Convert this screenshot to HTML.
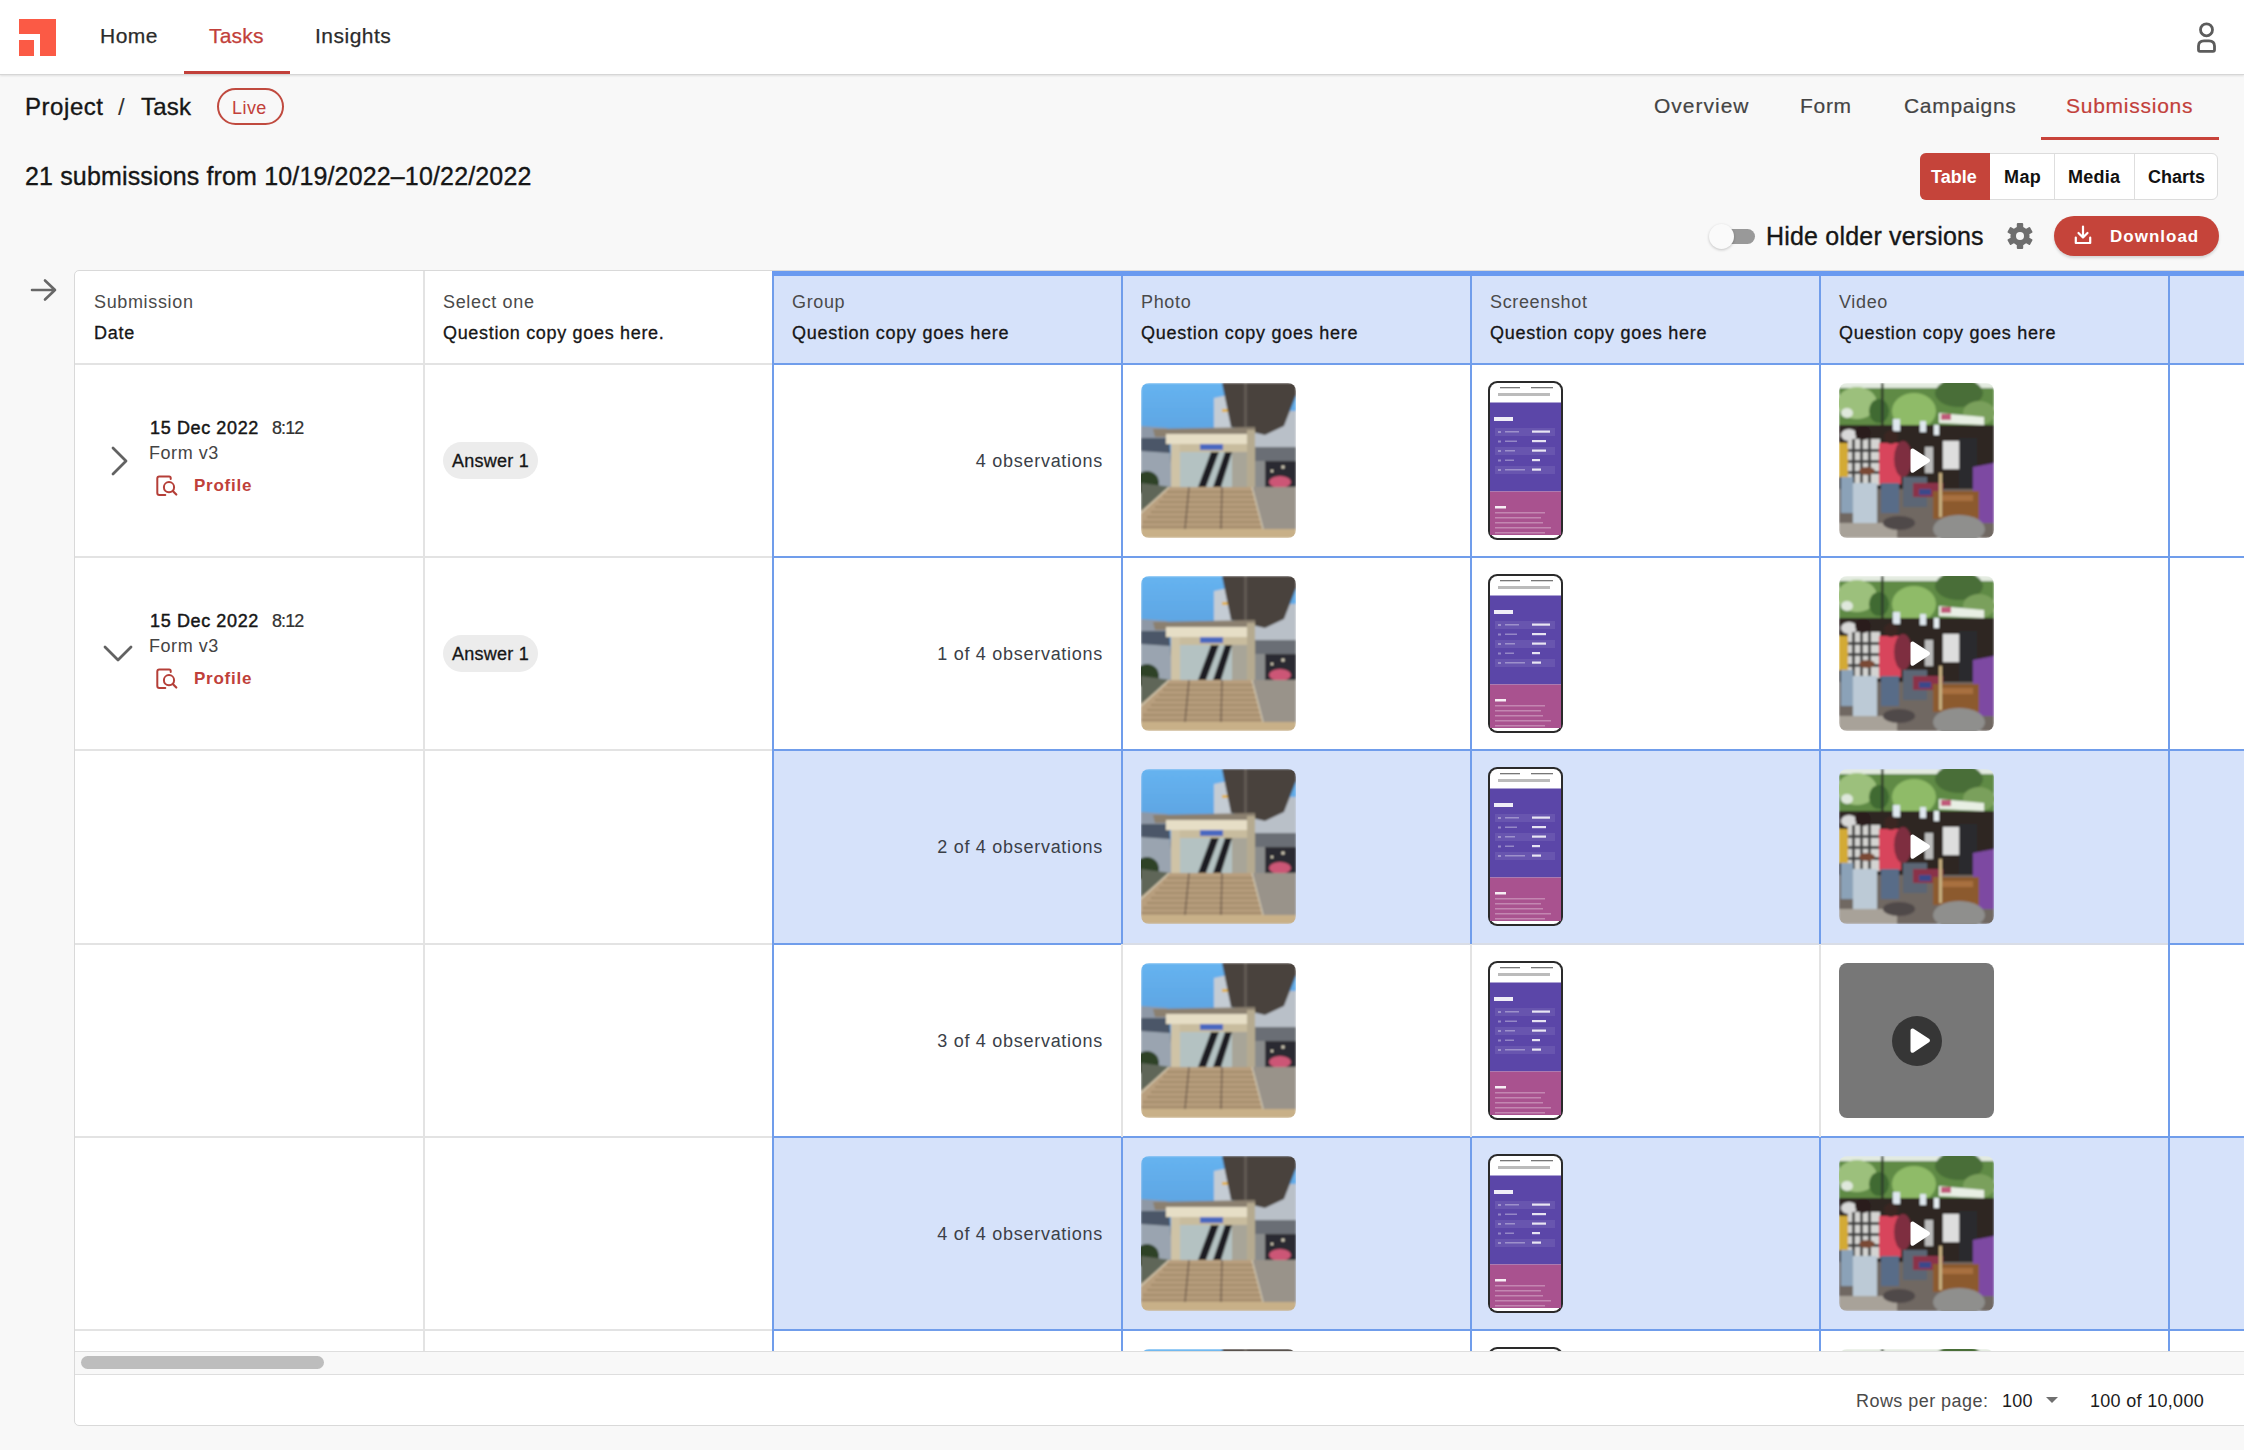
<!DOCTYPE html>
<html><head><meta charset="utf-8">
<style>
*{box-sizing:border-box;margin:0;padding:0}
html,body{width:2244px;height:1450px;overflow:hidden}
body{position:relative;background:#f8f8f8;font-family:"Liberation Sans",sans-serif;color:#1b1b1b}
.a{position:absolute;white-space:nowrap;line-height:1}
.nav{font-size:21px;color:#2b2b2b;-webkit-text-stroke:.25px currentColor}
.tab{font-size:21px;color:#444;-webkit-text-stroke:.2px currentColor}
.red{color:#c2403a}
.hd1{font-size:18px;color:#4a4a4a;letter-spacing:.65px}
.hd2{font-size:18px;color:#161616;letter-spacing:.75px;-webkit-text-stroke:.3px #161616}
.obs{font-size:18px;color:#3b3f48;letter-spacing:.72px;text-align:right}
.dt{font-size:18px;color:#161616;letter-spacing:.62px;-webkit-text-stroke:.45px #161616}
.tm{font-size:18px;color:#333;letter-spacing:-.9px;-webkit-text-stroke:.2px #333}
.fv{font-size:18px;color:#444;letter-spacing:.55px}
.pf{font-size:17px;color:#c0403a;font-weight:bold;letter-spacing:.75px}
.chip{position:absolute;width:95px;height:37px;background:#ececec;border-radius:19px}
.ans{font-size:18px;color:#161616;letter-spacing:.25px;-webkit-text-stroke:.3px #161616}
</style></head>
<body>
<svg width="0" height="0" style="position:absolute">
<defs>
<clipPath id="rc"><rect x="0" y="0" width="155" height="155" rx="8"/></clipPath>
<linearGradient id="sky" x1="0" y1="0" x2="0" y2="1"><stop offset="0" stop-color="#66b3f0"/><stop offset="1" stop-color="#4b86c4"/></linearGradient>
<linearGradient id="tree" x1="0" y1="0" x2="0" y2="1"><stop offset="0" stop-color="#7fa95c"/><stop offset="1" stop-color="#4f7a3a"/></linearGradient>
<filter id="bl" x="0" y="0" width="1" height="1"><feGaussianBlur stdDeviation="0.9"/></filter>
<symbol id="photo" viewBox="0 0 155 155">
<g clip-path="url(#rc)"><g filter="url(#bl)">
<rect width="155" height="155" fill="url(#sky)"/>
<polygon points="73,15 87,12 91,46 73,46" fill="#c4ccd4"/>
<rect x="81" y="26" width="6" height="3" fill="#e0b040"/>
<rect x="110" y="28" width="45" height="40" fill="#b9c0c8"/>
<rect x="110" y="64" width="45" height="14" fill="#6a6e74"/>
<rect x="116" y="78" width="39" height="34" fill="#2a2a30"/>
<ellipse cx="139" cy="99" rx="11" ry="6" fill="#cc5676"/>
<circle cx="142" cy="84" r="1.6" fill="#f0e8d0"/><circle cx="131" cy="88" r="1.2" fill="#f0e8d0"/>
<rect x="114" y="78" width="10" height="44" fill="#8a8c8c"/>
<polygon points="81,0 155,0 155,12 143,43 124,52 90,44" fill="#4a433e"/>
<rect x="103.5" y="0" width="2" height="44" fill="#6a625c"/>
<polygon points="0,43 26,45 28,55 0,55" fill="#8e98a6"/>
<polygon points="0,55 28,55 30,80 0,78" fill="#4b5668"/>
<polygon points="0,68 29,70 33,112 0,112" fill="#9aa4b0"/>
<polygon points="12,46 114,44 114,53 14,54" fill="#8b8070"/>
<rect x="25" y="51" width="82" height="10" fill="#e6dec6"/>
<rect x="30" y="61" width="77" height="9" fill="#c8bc9e"/>
<rect x="59" y="61" width="23" height="6" fill="#4a68c0"/>
<rect x="39" y="69" width="67" height="35" fill="#b4c2c2"/>
<polygon points="57,104 70,69 78,69 65,104" fill="#1e1e22"/>
<polygon points="72,104 84,69 91,69 80,104" fill="#1e1e22"/>
<rect x="91" y="69" width="15" height="35" fill="#a8a598"/>
<rect x="30" y="61" width="9" height="44" fill="#cfc3a6"/>
<rect x="106" y="47" width="8" height="60" fill="#b5aa90"/>
<ellipse cx="6" cy="100" rx="12" ry="12" fill="#2e4228"/>
<rect x="110" y="104" width="45" height="51" fill="#99938a"/>
<polygon points="0,100 30,104 0,130" fill="#5e6658"/>
<polygon points="28,104 111,104 122,146 0,146 0,128" fill="#b89f7e"/>
<g stroke="#8d7658" stroke-width="1.2">
<line x1="26" y1="109" x2="112" y2="109"/><line x1="22" y1="114" x2="114" y2="114"/><line x1="18" y1="119" x2="115" y2="119"/><line x1="14" y1="124" x2="116" y2="124"/><line x1="10" y1="129" x2="117" y2="129"/><line x1="6" y1="134" x2="119" y2="134"/><line x1="2" y1="139" x2="120" y2="139"/><line x1="0" y1="144" x2="121" y2="144"/>
</g>
<g stroke="#5a4a40" stroke-width="1.1"><line x1="48" y1="104" x2="44" y2="146"/><line x1="81" y1="104" x2="80" y2="146"/></g>
<g stroke="#d6ceb8" stroke-width="1.1"><line x1="28" y1="104" x2="0" y2="130"/><line x1="111" y1="104" x2="122" y2="146"/></g>
<rect x="0" y="146" width="155" height="9" fill="#c8b088"/>
</g></g>
</symbol>
<symbol id="crowd" viewBox="0 0 155 155">
<g clip-path="url(#rc)"><g filter="url(#bl)">
<rect width="155" height="155" fill="#5f8a45"/>
<rect x="0" y="0" width="155" height="5" fill="#e3ebe0"/>
<ellipse cx="18" cy="20" rx="20" ry="16" fill="#9cc07c"/>
<ellipse cx="8" cy="30" rx="6" ry="5" fill="#dfe8dc"/>
<ellipse cx="75" cy="28" rx="22" ry="18" fill="#8fbb68"/>
<ellipse cx="120" cy="10" rx="24" ry="14" fill="#4a6e38"/>
<ellipse cx="140" cy="30" rx="16" ry="12" fill="#7aa05c"/>
<ellipse cx="40" cy="28" rx="10" ry="12" fill="#3f6a30"/>
<rect x="42" y="0" width="2.5" height="48" fill="#2e3a2a"/>
<rect x="0" y="42" width="155" height="68" fill="#2e2624"/>
<rect x="54" y="36" width="7" height="12" fill="#dfe8ef"/><rect x="81" y="38" width="6" height="11" fill="#dfe8ef"/><rect x="95" y="42" width="5" height="10" fill="#e6eef2"/>
<polygon points="100,30 145,34 145,42 100,40" fill="#e8efe4"/>
<rect x="102" y="31" width="10" height="6" fill="#c05a7a"/>
<ellipse cx="10" cy="52" rx="8" ry="6" fill="#d8d8d8"/>
<rect x="0" y="60" width="11" height="34" fill="#d3aa34"/>
<rect x="9" y="56" width="32" height="46" fill="#d4d4d2"/>
<g fill="#3c3c3c"><rect x="13" y="56" width="3" height="46"/><rect x="21" y="56" width="3" height="46"/><rect x="29" y="56" width="3" height="46"/><rect x="9" y="66" width="32" height="3"/><rect x="9" y="77" width="32" height="3"/><rect x="9" y="88" width="32" height="3"/></g>
<ellipse cx="28" cy="88" rx="8" ry="4" fill="#7a4a36"/>
<ellipse cx="24" cy="50" rx="8" ry="7" fill="#2a1e1c"/>
<rect x="40" y="60" width="22" height="41" fill="#d8445c"/>
<ellipse cx="52" cy="54" rx="7" ry="7" fill="#3a2820"/>
<ellipse cx="64" cy="76" rx="9" ry="18" fill="#7e2e40"/>
<rect x="104" y="58" width="18" height="28" fill="#dedede"/>
<rect x="86" y="64" width="8" height="26" fill="#bdbdbd"/>
<rect x="120" y="55" width="18" height="50" fill="#2c2a2e"/>
<rect x="0" y="106" width="155" height="49" fill="#6f6862"/>
<rect x="14" y="100" width="24" height="42" fill="#bccad6"/>
<rect x="2" y="94" width="12" height="36" fill="#8ba2b8"/>
<rect x="42" y="100" width="18" height="30" fill="#596c88"/>
<rect x="64" y="94" width="24" height="30" fill="#5c6674"/>
<polygon points="134,84 155,80 155,140 134,140" fill="#7d4aa2"/>
<rect x="74" y="100" width="30" height="14" fill="#8a3048"/>
<rect x="80" y="106" width="12" height="6" fill="#3a4a8a"/>
<rect x="94" y="108" width="46" height="28" fill="#8c5a2e"/>
<rect x="100" y="112" width="34" height="6" fill="#a87040"/>
<rect x="100" y="90" width="3" height="44" fill="#c8b080"/>
<ellipse cx="120" cy="146" rx="26" ry="14" fill="#8f8f8d"/>
<rect x="0" y="140" width="58" height="15" fill="#a8a299"/>
<ellipse cx="60" cy="140" rx="16" ry="7" fill="#504848"/>
</g></g>
</symbol>
<symbol id="phone" viewBox="0 0 75 159">
<rect x="0" y="0" width="75" height="159" rx="9" fill="#2a2a2a"/>
<rect x="2" y="2" width="71" height="155" rx="7.5" fill="#fff"/>
<rect x="2" y="21.5" width="71" height="89" fill="#5b46a8"/>
<rect x="2" y="110.5" width="71" height="43.5" fill="#a9528f"/>
<g fill="#777"><rect x="12" y="6" width="20" height="1.3"/><rect x="43" y="6" width="22" height="1.3"/></g>
<rect x="10" y="12" width="52" height="3" fill="#bbb"/>
<rect x="6" y="36" width="19" height="4" fill="#fff" opacity=".9"/>
<g fill="#fff" opacity=".08"><rect x="7" y="47" width="60" height="8"/><rect x="7" y="66" width="60" height="8"/><rect x="7" y="85" width="60" height="8"/></g>
<g fill="#fff" opacity=".35"><rect x="10" y="50" width="3" height="2"/><rect x="17" y="50" width="14" height="1.5"/><rect x="10" y="59.5" width="3" height="2"/><rect x="17" y="59.5" width="12" height="1.5"/><rect x="10" y="69" width="3" height="2"/><rect x="17" y="69" width="10" height="1.5"/><rect x="10" y="78.5" width="3" height="2"/><rect x="17" y="78.5" width="9" height="1.5"/><rect x="10" y="88" width="3" height="2"/><rect x="17" y="88" width="20" height="1.5"/></g>
<g fill="#fff" opacity=".85"><rect x="44" y="49.5" width="18" height="2.2"/><rect x="44" y="59" width="14" height="2.2"/><rect x="44" y="68.5" width="14" height="2.2"/><rect x="44" y="78" width="8" height="2.2"/><rect x="44" y="87.5" width="9" height="2.2"/></g>
<rect x="7" y="125" width="11" height="2.5" fill="#fff" opacity=".9"/>
<g fill="#fff" opacity=".3"><rect x="7" y="131" width="50" height="1.5"/><rect x="7" y="136" width="46" height="1.5"/><rect x="7" y="141" width="48" height="1.5"/><rect x="7" y="146" width="56" height="1.5"/><rect x="7" y="151" width="50" height="1.5"/></g>
</symbol>
<symbol id="play" viewBox="0 0 50 50">
<path d="M18.5 14.5C18.5 12.8 20.2 11.9 21.6 12.8L37 22.8C38.3 23.6 38.3 25.5 37 26.3L21.6 36.4C20.2 37.3 18.5 36.3 18.5 34.7Z" fill="#fff"/>
</symbol>
</defs></svg>

<div class="a" style="left:0;top:0;width:2244px;height:75px;background:#fff;border-bottom:1px solid #d6d6d6;box-shadow:0 1px 2px rgba(0,0,0,.10)"></div>
<svg class="a" style="left:19px;top:19px" width="37" height="37" viewBox="0 0 37 37">
<path d="M0 0H37V37H21V15H0Z" fill="#fb5a45"/><rect x="0" y="21" width="15" height="16" fill="#fb5a45"/>
</svg>
<div class="a nav" style="left:100px;top:25px;letter-spacing:.5px">Home</div>
<div class="a nav red" style="left:209px;top:25px;letter-spacing:.2px">Tasks</div>
<div class="a nav" style="left:315px;top:25px;letter-spacing:.5px">Insights</div>
<div class="a" style="left:184px;top:71px;width:106px;height:3px;background:#c2403a"></div>
<svg class="a" style="left:2194px;top:20px" width="26" height="34" viewBox="0 0 26 34">
<circle cx="12.5" cy="9.8" r="6" fill="none" stroke="#5c5c5c" stroke-width="2.8"/>
<path d="M4.5 29.8V26C4.5 22 7 20.8 10 20.8H15C18 20.8 20.5 22 20.5 26V29.8C20.5 30.8 20 31.3 19 31.3H6C5 31.3 4.5 30.8 4.5 29.8Z" fill="none" stroke="#5c5c5c" stroke-width="2.8" stroke-linejoin="round"/>
</svg>
<div class="a" style="left:25px;top:95px;font-size:24px;color:#161616;letter-spacing:.55px;-webkit-text-stroke:.35px #161616">Project</div><div class="a" style="left:118px;top:95px;font-size:24px;color:#333">/</div><div class="a" style="left:141px;top:95px;font-size:24px;color:#161616;letter-spacing:.25px;-webkit-text-stroke:.35px #161616">Task</div>
<div class="a" style="left:217px;top:88px;width:67px;height:37px;border:2px solid #c04a3f;border-radius:19px"></div>
<div class="a red" style="left:232px;top:99px;font-size:18px;letter-spacing:.45px">Live</div>
<div class="a tab" style="left:1654px;top:95px;letter-spacing:1px">Overview</div>
<div class="a tab" style="left:1800px;top:95px;letter-spacing:.7px">Form</div>
<div class="a tab" style="left:1904px;top:95px;letter-spacing:.7px">Campaigns</div>
<div class="a tab red" style="left:2066px;top:95px;letter-spacing:.75px">Submissions</div>
<div class="a" style="left:2041px;top:137px;width:178px;height:3px;background:#c8433a"></div>
<div class="a" style="left:25px;top:164px;font-size:25px;color:#161616;letter-spacing:.15px;-webkit-text-stroke:.35px #161616">21 submissions from 10/19/2022&ndash;10/22/2022</div>
<div class="a" style="left:1920px;top:153px;width:298px;height:47px;background:#fff;border:1px solid #dcdcdc;border-radius:6px"></div>
<div class="a" style="left:1920px;top:153px;width:70px;height:47px;background:#c5443a;border-radius:6px 0 0 6px"></div>
<div class="a" style="left:2054px;top:154px;width:1px;height:45px;background:#dedede"></div>
<div class="a" style="left:2134px;top:154px;width:1px;height:45px;background:#dedede"></div>
<div class="a" style="left:1931px;top:168px;font-size:18px;font-weight:bold;color:#fff">Table</div>
<div class="a" style="left:2004px;top:168px;font-size:18px;font-weight:bold;color:#111;letter-spacing:.4px">Map</div>
<div class="a" style="left:2068px;top:168px;font-size:18px;font-weight:bold;color:#111;letter-spacing:.25px">Media</div>
<div class="a" style="left:2148px;top:168px;font-size:18px;font-weight:bold;color:#111">Charts</div>
<div class="a" style="left:1720px;top:229px;width:35px;height:15px;background:#999;border-radius:8px"></div>
<div class="a" style="left:1709px;top:224px;width:25px;height:25px;background:#fafafa;border-radius:50%;box-shadow:0 1px 3px rgba(0,0,0,.22)"></div>
<div class="a" style="left:1766px;top:224px;font-size:25px;color:#161616;letter-spacing:.2px;-webkit-text-stroke:.35px #161616">Hide older versions</div>
<svg class="a" style="left:2007px;top:223px" width="26" height="26" viewBox="0 0 26 26">
<g fill="#6e6e6e" transform="translate(13 13)">
<circle r="9.6"/>
<rect x="-3.2" y="-13" width="6.4" height="26" rx="1"/>
<rect x="-3.2" y="-13" width="6.4" height="26" rx="1" transform="rotate(60)"/>
<rect x="-3.2" y="-13" width="6.4" height="26" rx="1" transform="rotate(120)"/>
</g><circle cx="13" cy="13" r="4" fill="#f7f7f7"/>
</svg>
<div class="a" style="left:2054px;top:216px;width:165px;height:40px;background:#c5443a;border-radius:20px;box-shadow:0 2px 3px rgba(0,0,0,.15)"></div>
<svg class="a" style="left:2074px;top:225px" width="18" height="20" viewBox="0 0 18 20">
<path d="M9 1.5V12.5M4.5 8L9 12.5L13.5 8M1.8 12.5V18H16.2V12.5" fill="none" stroke="#fff" stroke-width="2.2" stroke-linecap="round" stroke-linejoin="round"/>
</svg>
<div class="a" style="left:2110px;top:228px;font-size:17px;font-weight:bold;color:#fff;letter-spacing:1px">Download</div>
<svg class="a" style="left:30px;top:278px" width="28" height="24" viewBox="0 0 28 24">
<path d="M2 12H25M15 2.5L25 12L15 21.5" fill="none" stroke="#676767" stroke-width="2.6" stroke-linecap="round" stroke-linejoin="round"/>
</svg>

<div class="a" style="left:74px;top:270px;width:2300px;height:1156px;background:#fff;border:1px solid #d9d9d9;border-radius:5px 0 0 5px"></div>
<div class="a" style="left:773px;top:276px;width:1471px;height:88px;background:#d6e2fa;"></div>
<div class="a" style="left:773px;top:750px;width:1471px;height:194px;background:#d6e2fa;"></div>
<div class="a" style="left:773px;top:1137px;width:1471px;height:193px;background:#d6e2fa;"></div>
<div class="a" style="left:75px;top:363px;width:698px;height:2px;background:#e3e3e3;"></div>
<div class="a" style="left:75px;top:556px;width:698px;height:2px;background:#e3e3e3;"></div>
<div class="a" style="left:75px;top:749px;width:698px;height:2px;background:#e3e3e3;"></div>
<div class="a" style="left:75px;top:943px;width:698px;height:2px;background:#e3e3e3;"></div>
<div class="a" style="left:75px;top:1136px;width:698px;height:2px;background:#e3e3e3;"></div>
<div class="a" style="left:75px;top:1329px;width:698px;height:2px;background:#e3e3e3;"></div>
<div class="a" style="left:423px;top:271px;width:2px;height:1080px;background:#e3e3e3;"></div>
<div class="a" style="left:772px;top:363px;width:1472px;height:2px;background:#709deb;"></div>
<div class="a" style="left:772px;top:556px;width:1472px;height:2px;background:#709deb;"></div>
<div class="a" style="left:772px;top:749px;width:1472px;height:2px;background:#709deb;"></div>
<div class="a" style="left:772px;top:1136px;width:1472px;height:2px;background:#709deb;"></div>
<div class="a" style="left:772px;top:1329px;width:1472px;height:2px;background:#709deb;"></div>
<div class="a" style="left:772px;top:943px;width:350px;height:2px;background:#709deb;"></div>
<div class="a" style="left:1122px;top:943px;width:1047px;height:2px;background:#d9dde6;"></div>
<div class="a" style="left:2169px;top:943px;width:75px;height:2px;background:#709deb;"></div>
<div class="a" style="left:772px;top:271px;width:2px;height:1080px;background:#709deb;"></div>
<div class="a" style="left:2168px;top:271px;width:2px;height:1080px;background:#709deb;"></div>
<div class="a" style="left:1121px;top:271px;width:2px;height:673px;background:#709deb;"></div>
<div class="a" style="left:1121px;top:944px;width:2px;height:193px;background:#e3e3e3;"></div>
<div class="a" style="left:1121px;top:1137px;width:2px;height:214px;background:#709deb;"></div>
<div class="a" style="left:1470px;top:271px;width:2px;height:673px;background:#709deb;"></div>
<div class="a" style="left:1470px;top:944px;width:2px;height:193px;background:#e3e3e3;"></div>
<div class="a" style="left:1470px;top:1137px;width:2px;height:214px;background:#709deb;"></div>
<div class="a" style="left:1819px;top:271px;width:2px;height:673px;background:#709deb;"></div>
<div class="a" style="left:1819px;top:944px;width:2px;height:193px;background:#e3e3e3;"></div>
<div class="a" style="left:1819px;top:1137px;width:2px;height:214px;background:#709deb;"></div>
<div class="a" style="left:772px;top:271px;width:1472px;height:5px;background:#6a9af0;"></div>
<div class="a hd1" style="left:94px;top:293px">Submission</div>
<div class="a hd2" style="left:94px;top:324px;">Date</div>
<div class="a hd1" style="left:443px;top:293px">Select one</div>
<div class="a hd2" style="left:443px;top:324px;letter-spacing:.68px">Question copy goes here.</div>
<div class="a hd1" style="left:792px;top:293px">Group</div>
<div class="a hd2" style="left:792px;top:324px;">Question copy goes here</div>
<div class="a hd1" style="left:1141px;top:293px">Photo</div>
<div class="a hd2" style="left:1141px;top:324px;">Question copy goes here</div>
<div class="a hd1" style="left:1490px;top:293px">Screenshot</div>
<div class="a hd2" style="left:1490px;top:324px;">Question copy goes here</div>
<div class="a hd1" style="left:1839px;top:293px">Video</div>
<div class="a hd2" style="left:1839px;top:324px;">Question copy goes here</div>
<svg class="a" style="left:110px;top:446px" width="20" height="30" viewBox="0 0 20 30"><path d="M3 2L16 15L3 28" fill="none" stroke="#626262" stroke-width="2.8" stroke-linecap="round" stroke-linejoin="round"/></svg>
<div class="a dt" style="left:150px;top:419px">15 Dec 2022</div>
<div class="a tm" style="left:272px;top:419px">8:12</div>
<div class="a fv" style="left:149px;top:444px">Form v3</div>
<svg class="a" style="left:155px;top:474px" width="24" height="24" viewBox="0 0 24 24"><path d="M10.3 21.1H4.3C3.2 21.1 2.3 20.2 2.3 19.1V4.4C2.3 3.3 3.2 2.4 4.3 2.4H14.2C15 2.4 15.7 3.1 15.7 3.9V5.1" fill="none" stroke="#b53f38" stroke-width="2" stroke-linecap="round" stroke-linejoin="round"/><circle cx="14" cy="13.2" r="5.1" fill="none" stroke="#b53f38" stroke-width="2"/><path d="M17.8 17L21.3 20.5" stroke="#b53f38" stroke-width="2.2" stroke-linecap="round"/></svg>
<div class="a pf" style="left:194px;top:477px">Profile</div>
<div class="chip" style="left:443px;top:442px"></div>
<div class="a ans" style="left:452px;top:452px">Answer 1</div>
<div class="a obs" style="left:903px;width:200px;top:452px">4 observations</div>
<svg class="a" style="left:1141px;top:383px" width="155" height="155"><use href="#photo"/></svg>
<svg class="a" style="left:1488px;top:381px" width="75" height="159"><use href="#phone"/></svg>
<svg class="a" style="left:1839px;top:383px" width="155" height="155"><use href="#crowd"/></svg>
<svg class="a" style="left:1892px;top:436px" width="50" height="50"><use href="#play"/></svg>
<svg class="a" style="left:102px;top:644px" width="32" height="20" viewBox="0 0 32 20"><path d="M3 3L16 16L29 3" fill="none" stroke="#626262" stroke-width="2.8" stroke-linecap="round" stroke-linejoin="round"/></svg>
<div class="a dt" style="left:150px;top:612px">15 Dec 2022</div>
<div class="a tm" style="left:272px;top:612px">8:12</div>
<div class="a fv" style="left:149px;top:637px">Form v3</div>
<svg class="a" style="left:155px;top:667px" width="24" height="24" viewBox="0 0 24 24"><path d="M10.3 21.1H4.3C3.2 21.1 2.3 20.2 2.3 19.1V4.4C2.3 3.3 3.2 2.4 4.3 2.4H14.2C15 2.4 15.7 3.1 15.7 3.9V5.1" fill="none" stroke="#b53f38" stroke-width="2" stroke-linecap="round" stroke-linejoin="round"/><circle cx="14" cy="13.2" r="5.1" fill="none" stroke="#b53f38" stroke-width="2"/><path d="M17.8 17L21.3 20.5" stroke="#b53f38" stroke-width="2.2" stroke-linecap="round"/></svg>
<div class="a pf" style="left:194px;top:670px">Profile</div>
<div class="chip" style="left:443px;top:635px"></div>
<div class="a ans" style="left:452px;top:645px">Answer 1</div>
<div class="a obs" style="left:903px;width:200px;top:645px">1 of 4 observations</div>
<svg class="a" style="left:1141px;top:576px" width="155" height="155"><use href="#photo"/></svg>
<svg class="a" style="left:1488px;top:574px" width="75" height="159"><use href="#phone"/></svg>
<svg class="a" style="left:1839px;top:576px" width="155" height="155"><use href="#crowd"/></svg>
<svg class="a" style="left:1892px;top:629px" width="50" height="50"><use href="#play"/></svg>
<div class="a obs" style="left:903px;width:200px;top:838px">2 of 4 observations</div>
<svg class="a" style="left:1141px;top:769px" width="155" height="155"><use href="#photo"/></svg>
<svg class="a" style="left:1488px;top:767px" width="75" height="159"><use href="#phone"/></svg>
<svg class="a" style="left:1839px;top:769px" width="155" height="155"><use href="#crowd"/></svg>
<svg class="a" style="left:1892px;top:822px" width="50" height="50"><use href="#play"/></svg>
<div class="a obs" style="left:903px;width:200px;top:1032px">3 of 4 observations</div>
<svg class="a" style="left:1141px;top:963px" width="155" height="155"><use href="#photo"/></svg>
<svg class="a" style="left:1488px;top:961px" width="75" height="159"><use href="#phone"/></svg>
<div class="a" style="left:1839px;top:963px;width:155px;height:155px;background:#777;border-radius:8px"></div>
<div class="a" style="left:1892px;top:1016px;width:50px;height:50px;background:#363636;border-radius:50%"></div>
<svg class="a" style="left:1892px;top:1016px" width="50" height="50"><use href="#play"/></svg>
<div class="a obs" style="left:903px;width:200px;top:1225px">4 of 4 observations</div>
<svg class="a" style="left:1141px;top:1156px" width="155" height="155"><use href="#photo"/></svg>
<svg class="a" style="left:1488px;top:1154px" width="75" height="159"><use href="#phone"/></svg>
<svg class="a" style="left:1839px;top:1156px" width="155" height="155"><use href="#crowd"/></svg>
<svg class="a" style="left:1892px;top:1209px" width="50" height="50"><use href="#play"/></svg>
<div class="a" style="left:1141px;top:1349px;width:155px;height:2px;overflow:hidden"><svg width="155" height="155"><use href="#photo"/></svg></div>
<div class="a" style="left:1488px;top:1347px;width:75px;height:4px;overflow:hidden"><svg width="75" height="159"><use href="#phone"/></svg></div>
<div class="a" style="left:1839px;top:1349px;width:155px;height:2px;overflow:hidden"><svg width="155" height="155"><use href="#crowd"/></svg></div>
<div class="a" style="left:75px;top:1351px;width:2169px;height:24px;background:#f8f8f8;border-top:1px solid #dedede;border-bottom:1px solid #dedede"></div>
<div class="a" style="left:81px;top:1356px;width:243px;height:13px;background:#bdbdbd;border-radius:7px"></div>
<div class="a" style="left:1856px;top:1392px;font-size:18px;color:#4a4a4a;letter-spacing:.45px">Rows per page:</div>
<div class="a" style="left:2002px;top:1392px;font-size:18px;color:#1b1b1b;letter-spacing:.3px">100</div>
<svg class="a" style="left:2045px;top:1396px" width="14" height="8" viewBox="0 0 14 8"><path d="M1 1H13L7 7Z" fill="#707070"/></svg>
<div class="a" style="left:2090px;top:1392px;font-size:18px;color:#1b1b1b;letter-spacing:.3px">100 of 10,000</div>
</body></html>
